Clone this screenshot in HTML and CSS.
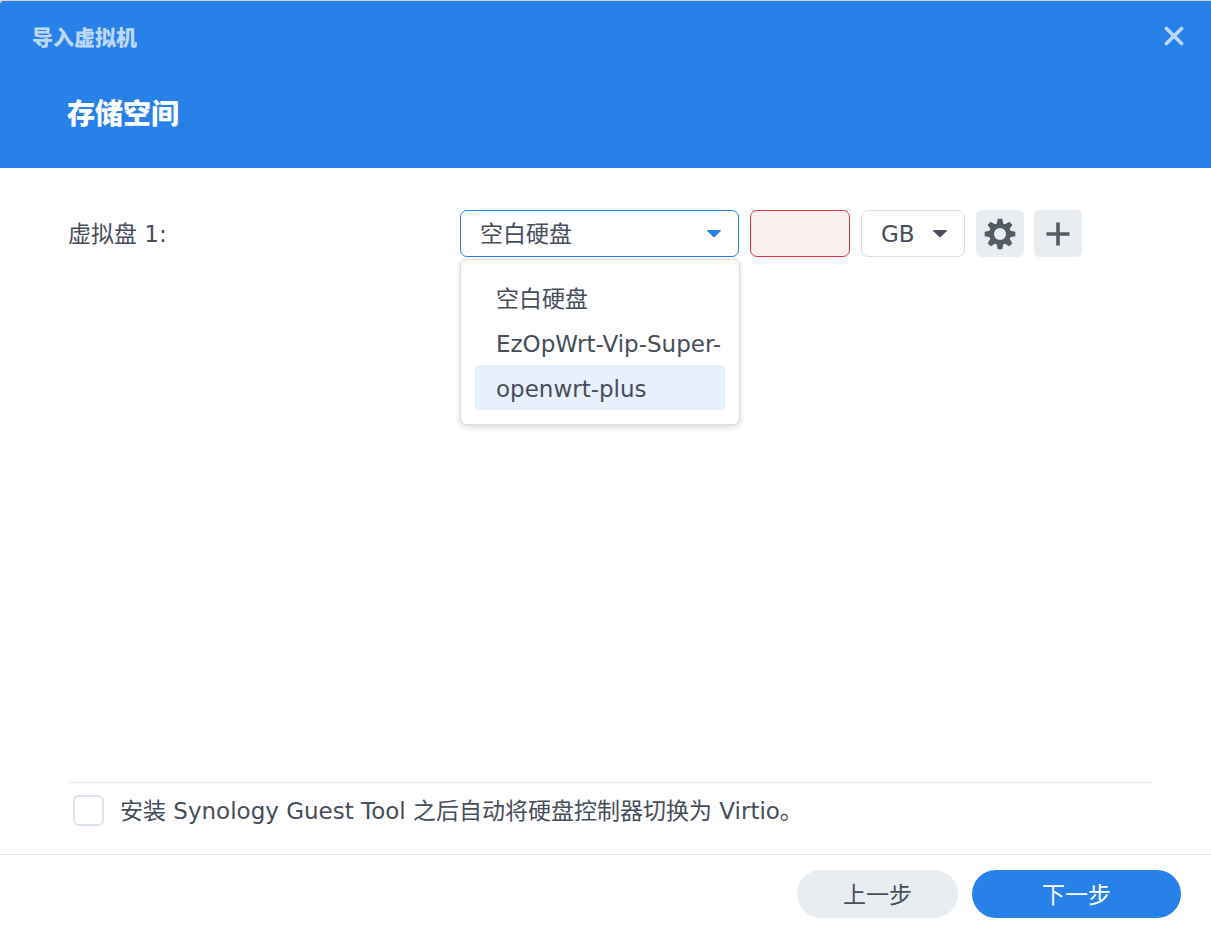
FILE: index.html
```html
<!DOCTYPE html>
<html lang="zh-CN">
<head>
    <meta charset="UTF-8">
    <meta name="viewport" content="width=device-width, initial-scale=1.0">
    <title>导入虚拟机</title>
    <link rel="stylesheet" href="styles.css">
</head>
<body>
    <div class="wizard">
        <header class="wizard-header">
            <div class="title-bar">
                <h1>导入虚拟机</h1>
                <button type="button" class="close-button" aria-label="关闭">
                    <svg width="20" height="20" viewBox="0 0 20 20">
                        <path d="M2.4 2.4 L17.6 17.6 M17.6 2.4 L2.4 17.6" fill="none" stroke="currentColor" stroke-width="3.6" stroke-linecap="round"/>
                    </svg>
                </button>
            </div>
            <h2>存储空间</h2>
        </header>

        <form class="wizard-form" id="storageForm">
            <main class="wizard-body">
                <div class="disk-row">
                    <label class="disk-label" for="disk1">虚拟盘 1:</label>

                    <div class="select-box disk-select">
                        <select id="disk1" name="disk1">
                            <option selected>空白硬盘</option>
                            <option>EzOpWrt-Vip-Super-</option>
                            <option>openwrt-plus</option>
                        </select>
                        <svg class="arrow" width="14" height="8" viewBox="0 0 14 8">
                            <path d="M0.6 0 H13.4 Q14.3 0.6 13.6 1.3 L8.2 6.6 Q7 7.7 5.8 6.6 L0.4 1.3 Q-0.3 0.6 0.6 0 Z" fill="currentColor"/>
                        </svg>
                        <!-- 展开的下拉列表 -->
                        <ul class="menu" role="listbox">
                            <li role="option">空白硬盘</li>
                            <li role="option">EzOpWrt-Vip-Super-</li>
                            <li role="option" class="active">openwrt-plus</li>
                        </ul>
                    </div>

                    <input type="text" class="size-input" name="size" aria-label="大小">

                    <div class="select-box unit-select">
                        <select name="unit" aria-label="单位">
                            <option selected>GB</option>
                            <option>TB</option>
                        </select>
                        <svg class="arrow" width="14" height="8" viewBox="0 0 14 8">
                            <path d="M0.6 0 H13.4 Q14.3 0.6 13.6 1.3 L8.2 6.6 Q7 7.7 5.8 6.6 L0.4 1.3 Q-0.3 0.6 0.6 0 Z" fill="currentColor"/>
                        </svg>
                    </div>

                    <div class="tools">
                        <button type="button" class="icon-button" aria-label="设置">
                            <svg width="32" height="32" viewBox="-16 -16 32 32">
                                <g fill="currentColor">
                                    <path id="teeth" d="M-3.6 -9 L-2.2 -15.3 H2.2 L3.6 -9 V9 L2.2 15.3 H-2.2 L-3.6 9 Z"/>
                                    <use href="#teeth" transform="rotate(45)"/>
                                    <use href="#teeth" transform="rotate(90)"/>
                                    <use href="#teeth" transform="rotate(135)"/>
                                    <circle r="10.8"/>
                                </g>
                                <circle r="6" fill="#e8edf1"/>
                            </svg>
                        </button>
                        <button type="button" class="icon-button" aria-label="添加">
                            <svg width="24" height="24" viewBox="0 0 24 24">
                                <path d="M12 0.5 V23.5 M0.5 12 H23.5" fill="none" stroke="currentColor" stroke-width="3.6"/>
                            </svg>
                        </button>
                    </div>
                </div>

                <div class="option-row">
                    <input type="checkbox" id="virtio" name="virtio">
                    <label for="virtio">安装 Synology Guest Tool 之后自动将硬盘控制器切换为 Virtio。</label>
                </div>
            </main>

            <footer class="wizard-footer">
                <button type="button" class="button">上一步</button>
                <button type="submit" class="button primary">下一步</button>
            </footer>
        </form>
    </div>
</body>
</html>
```
FILE: styles.css
```css
* {
    box-sizing: border-box;
}
body {
    margin: 0;
    background-color: #d3d5d6;
    color: #464e5a;
    font-family: "DejaVu Sans", "Noto Sans CJK SC", sans-serif;
    font-size: 23px;
    line-height: 30px;
}
button, input, select {
    margin: 0;
    font: inherit;
    color: inherit;
}
button {
    border: none;
    padding: 0;
    cursor: pointer;
}
svg {
    display: block;
}
.wizard {
    display: flex;
    flex-direction: column;
    min-height: 100vh;
    padding-top: 1px;
}
.wizard-header {
    height: 167px;
    padding: 20px 27px 0 32px;
    background-color: #2880e9;
    border-radius: 4px 0 0 0;
    color: #fff;
}
.title-bar {
    display: flex;
    justify-content: space-between;
    align-items: center;
    color: #bcd7f8;
}
h1, h2 {
    margin: 0;
    font-family: "Noto Sans CJK SC", sans-serif;
    font-weight: 900;
}
h1 {
    font-size: 21px;
    line-height: 30px;
}
h2 {
    margin-top: 41px;
    padding-left: 35px;
    font-size: 28px;
    line-height: 40px;
}
.close-button {
    background: none;
    color: inherit;
}
.wizard-form {
    flex: 1;
    display: flex;
    flex-direction: column;
    background-color: #fff;
}
.wizard-body {
    flex: 1;
    display: flex;
    flex-direction: column;
    justify-content: space-between;
    padding: 42px 58px 0 68px;
}
.disk-row {
    display: flex;
    align-items: center;
    gap: 11px;
}
.disk-label {
    width: 381px;
    line-height: 32px;
}
.select-box {
    position: relative;
}
.select-box select {
    appearance: none;
    display: block;
    width: 100%;
    height: 47px;
    padding: 0 19px;
    border: 1px solid #d5dfea;
    border-radius: 7px;
    background-color: #fff;
    outline: none;
}
.select-box .arrow {
    position: absolute;
    top: 20px;
    right: 18px;
    pointer-events: none;
}
.disk-select {
    width: 279px;
}
.disk-select select {
    border-color: #2880e9;
}
.disk-select .arrow {
    color: #2880e9;
}
.unit-select {
    width: 104px;
}
.menu {
    position: absolute;
    top: 49px;
    left: 0;
    width: 280px;
    margin: 0;
    padding: 15px 14px 14px;
    border: 1px solid #d5dfea;
    border-radius: 7px;
    background-color: #fff;
    box-shadow: 0 2px 6px rgba(0, 0, 0, 0.16);
    list-style: none;
}
.menu li {
    height: 45px;
    padding-left: 21px;
    border-radius: 4px;
    line-height: 49px;
    white-space: nowrap;
    overflow: hidden;
}
.menu .active {
    background-color: #e9f0fd;
}
.size-input {
    width: 100px;
    height: 47px;
    padding: 0 12px;
    border: 1px solid #e0343d;
    border-radius: 7px;
    background-color: #fdf0f0;
}
.tools {
    display: flex;
    gap: 10px;
}
.icon-button {
    display: flex;
    align-items: center;
    justify-content: center;
    width: 48px;
    height: 47px;
    border-radius: 5px;
    background-color: #e8edf1;
    color: #535b67;
}
.option-row {
    display: flex;
    align-items: center;
    gap: 16px;
    height: 72px;
    padding: 0 5px 16px;
    border-top: 1px solid #e6ebf0;
}
.option-row input {
    appearance: none;
    width: 31px;
    height: 31px;
    border: 2px solid #dbe3ec;
    border-radius: 6px;
    background-color: #fff;
}
.wizard-footer {
    display: flex;
    justify-content: flex-end;
    gap: 14px;
    padding: 15px 30px 18px;
    border-top: 1px solid #e0e7ee;
}
.button {
    min-width: 161px;
    height: 48px;
    padding-top: 2px;
    border-radius: 24px;
    background-color: #e8edf1;
}
.primary {
    min-width: 209px;
    background-color: #2880e9;
    color: #fff;
}
```
